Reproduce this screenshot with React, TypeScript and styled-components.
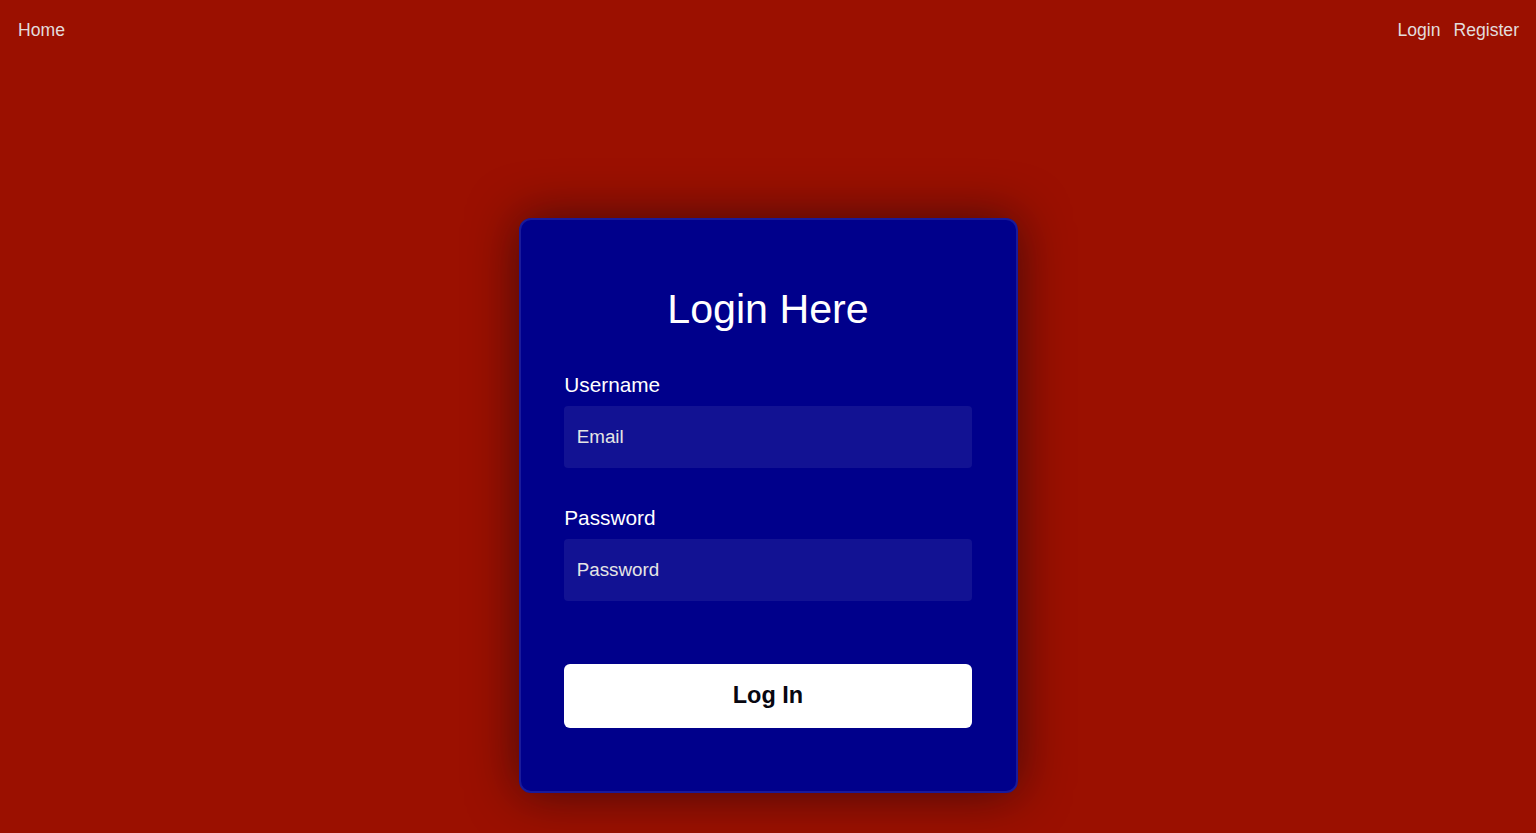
import React from "react";
import styled, { createGlobalStyle } from "styled-components";

const GlobalStyle = createGlobalStyle`
  * { margin: 0; padding: 0; box-sizing: border-box; }
  html, body { background: #9b1000; }
  body {
    font-family: "Liberation Sans", Arial, sans-serif;
    min-height: 833px;
  }
`;

const Page = styled.div`
  min-height: 833px;
  background: #9b1000;
  display: flex;
  flex-direction: column;
  align-items: center;
`;

const Nav = styled.nav`
  align-self: stretch;
  display: flex;
  justify-content: space-between;
  align-items: center;
  height: 60px;
  padding: 0 17px 0 18px;
`;

const NavGroup = styled.div`
  display: flex;
  gap: 13px;
`;

const NavLink = styled.a`
  color: #e2dcdc;
  font-size: 17.6px;
  text-decoration: none;
  cursor: pointer;
`;

const Card = styled.form`
  margin-top: 158px;
  width: 499px;
  background: #00008b;
  border: 2px solid #1a1a9a;
  border-radius: 12px;
  box-shadow: 0 0 50px rgba(8, 7, 16, 0.6);
  padding: 62.5px 43.75px 63.5px;
  display: flex;
  flex-direction: column;
`;

const Title = styled.h3`
  color: #ffffff;
  font-size: 41.2px;
  font-weight: 500;
  line-height: 52.5px;
  text-align: center;
`;

const Label = styled.label`
  display: block;
  color: #ffffff;
  font-size: 20.8px;
  font-weight: 500;
  line-height: 23px;
  margin-top: 37.5px;
`;

const Input = styled.input`
  display: block;
  width: 100%;
  height: 62.5px;
  margin-top: 10px;
  padding: 0 12.5px;
  background: rgba(255, 255, 255, 0.07);
  border: none;
  border-radius: 4px;
  color: #ffffff;
  font-family: "Liberation Sans", Arial, sans-serif;
  font-size: 18.8px;
  font-weight: 300;
  outline: none;
  &::placeholder {
    color: #e5e5e5;
  }
`;

const Button = styled.button`
  margin-top: 62.5px;
  width: 100%;
  height: 64px;
  background: #ffffff;
  color: #080710;
  border: none;
  border-radius: 6px;
  font-family: "Liberation Sans", Arial, sans-serif;
  font-size: 23.5px;
  font-weight: 600;
  cursor: pointer;
`;

export default function App() {
  return (
    <>
      <GlobalStyle />
      <Page>
        <Nav>
          <NavLink>Home</NavLink>
          <NavGroup>
            <NavLink>Login</NavLink>
            <NavLink>Register</NavLink>
          </NavGroup>
        </Nav>
        <Card onSubmit={(e) => e.preventDefault()}>
          <Title>Login Here</Title>
          <Label htmlFor="username">Username</Label>
          <Input id="username" type="text" placeholder="Email" />
          <Label htmlFor="password">Password</Label>
          <Input id="password" type="password" placeholder="Password" />
          <Button type="submit">Log In</Button>
        </Card>
      </Page>
    </>
  );
}
